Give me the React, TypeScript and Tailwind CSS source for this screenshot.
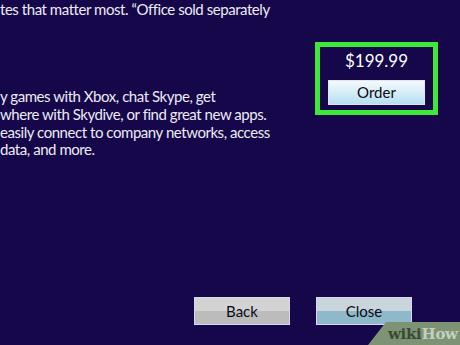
export default function App() {
  return (
    <div className="w-[460px] h-[345px] bg-[#15074a] relative overflow-hidden flex flex-col text-[#ecebf4]" style={{ fontFamily: "Lato, 'Open Sans', sans-serif" }}>
      <div className="flex">
        <div className="w-[310px] shrink-0">
          <p className="pt-[1px] text-[15px] leading-[16px] tracking-[-0.45px] whitespace-nowrap">tes that matter most. “Office sold separately</p>
          <div className="mt-[71px] text-[15px] leading-[17.8px] tracking-[-0.45px] whitespace-nowrap">
            <p>y games with Xbox, chat Skype, get</p>
            <p>where with Skydive, or find great new apps.</p>
            <p>easily connect to company networks, access</p>
            <p>data, and more.</p>
          </div>
        </div>
        <div className="ml-[5px] mt-[42px] w-[123px] h-[73px] border-[5px] border-[#3ee83a] flex flex-col items-center">
          <div className="text-[17px] leading-[20px] mt-[4px] text-white">$199.99</div>
          <div className="mt-[9px] w-[97px] h-[25px] border border-[#dfe6f0] bg-gradient-to-b from-[#f4fafd] to-[#b6dff1] flex items-center justify-center text-[15px] text-[#0a0a14]">Order</div>
        </div>
      </div>
      <div className="flex-1" />
      <div className="flex pl-[194px] gap-[26px] pb-[20px]">
        <div className="w-[96px] h-[28px] border border-[#d8d6f0] flex flex-col relative">
          <div className="flex-1 bg-[#d3d3d3]" />
          <div className="flex-1 bg-[#bcbcbc]" />
          <div className="absolute inset-0 flex items-center justify-center text-[15px] text-[#0a0a14]">Back</div>
        </div>
        <div className="w-[96px] h-[28px] border border-[#d8d6f0] flex flex-col relative">
          <div className="flex-1 bg-[#c9d5dd]" />
          <div className="flex-1 bg-[#8fb8cb]" />
          <div className="absolute inset-0 flex items-center justify-center text-[15px] text-[#0a0a14]">Close</div>
        </div>
      </div>
      <svg className="absolute left-0 top-0" width="460" height="345" viewBox="0 0 460 345">
        <polygon points="368,345 386,322 460,322 460,345" fill="#7d9373" />
      </svg>
      <div className="absolute left-[388px] top-[326px] text-[15px] leading-[16px] font-bold tracking-[-0.3px]" style={{ fontFamily: "'DejaVu Serif', serif" }}>
        <span className="text-[#3b4a36]">wiki</span><span className="text-[#c4cfc0]">How</span>
      </div>
    </div>
  );
}
